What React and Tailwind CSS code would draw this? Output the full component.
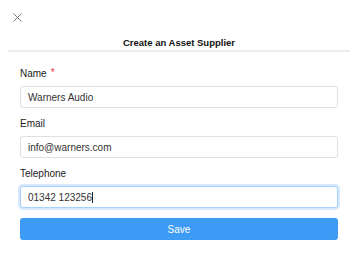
import React from 'react';

function Field({ label, value, required, focused }) {
  return (
    <div className="flex flex-col">
      <div className="flex items-center h-[14px] text-[10px] leading-[14px] text-[#222]">
        <span>{label}</span>
        {required && <span className="ml-[4px] text-[#e53935] text-[10px] -mt-[3px]">*</span>}
      </div>
      <div
        className={`mt-[5px] h-[22px] flex items-center px-[7px] rounded-[3px] bg-white border text-[10px] text-[#333] ${
          focused ? 'border-[#a9d2fb] shadow-[0_0_0_2px_#d6e9fd]' : 'border-[#e0e0e0]'
        }`}
      >
        <span>{value}</span>
        {focused && <span className="w-px h-[11px] bg-[#222]" />}
      </div>
    </div>
  );
}

export default function App() {
  return (
    <div className="w-[358px] h-[254px] bg-white font-['Liberation_Sans',Arial,sans-serif]">
      <div className="pt-[13px] pl-[13px] h-[22px]">
        <svg width="9" height="9" viewBox="0 0 9 9" className="block">
          <path d="M0.5 0.5 L8.5 8.5 M8.5 0.5 L0.5 8.5" stroke="#777" strokeWidth="1" fill="none" />
        </svg>
      </div>
      <div className="mt-[14px] text-center text-[9.5px] leading-[14px] font-bold text-[#111]">
        Create an Asset Supplier
      </div>
      <div className="mx-2 h-[2px] bg-[#ececec]" />
      <div className="px-5 pt-[15px] flex flex-col gap-[9px]">
        <Field label="Name" value="Warners Audio" required />
        <Field label="Email" value="info@warners.com" />
        <Field label="Telephone" value="01342 123256" focused />
        <button className="mt-px h-[22px] rounded-[3px] bg-[#3e9bf5] text-white text-[10px]">Save</button>
      </div>
    </div>
  );
}
